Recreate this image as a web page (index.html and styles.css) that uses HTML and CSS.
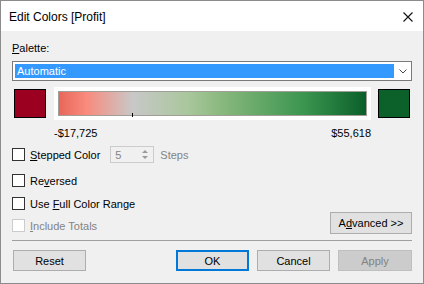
FILE: index.html
```html
<!DOCTYPE html>
<html lang="en">
<head>
  <meta charset="UTF-8" />
  <title>Edit Colors [Profit]</title>
  <link rel="stylesheet" href="styles.css">
</head>
<body>
  <div class="window">
    <div class="titlebar">
      <span class="title">Edit Colors [Profit]</span>
      <svg class="close" width="10" height="10" viewBox="0 0 10 10">
        <path d="M0.5 0.5 L9.5 9.5 M9.5 0.5 L0.5 9.5" stroke="#111" stroke-width="1.1" fill="none"/>
      </svg>
    </div>

    <div class="content">
      <div class="field-label"><u>P</u>alette:</div>
      <div class="dropdown">
        <span class="selected">Automatic</span>
        <svg class="chevron" width="8" height="5" viewBox="0 0 8 5">
          <path d="M0.5 0.5 L4 4 L7.5 0.5" stroke="#444" stroke-width="1" fill="none"/>
        </svg>
      </div>

      <div class="color-row">
        <div class="swatch swatch-neg"></div>
        <div class="ramp-frame">
          <div class="ramp"></div>
          <span class="tick"></span>
        </div>
        <div class="swatch swatch-pos"></div>
      </div>
      <div class="range-labels">
        <span>-$17,725</span>
        <span>$55,618</span>
      </div>

      <div class="check-row stepped">
        <span class="box"></span>
        <span class="check-text"><u>S</u>tepped Color</span>
        <div class="spinner">
          <span class="spin-value">5</span>
          <div class="spin-buttons">
            <span class="spin-up"></span>
            <span class="spin-down"></span>
          </div>
        </div>
        <span class="steps">Steps</span>
      </div>

      <div class="check-row reversed">
        <span class="box"></span>
        <span class="check-text">Re<u>v</u>ersed</span>
      </div>

      <div class="check-row full-range">
        <span class="box"></span>
        <span class="check-text">Use <u>F</u>ull Color Range</span>
      </div>

      <div class="totals-row">
        <div class="check-row disabled">
          <span class="box"></span>
          <span class="check-text"><u>I</u>nclude Totals</span>
        </div>
        <button class="btn advanced">A<u>d</u>vanced &gt;&gt;</button>
      </div>

      <div class="separator"></div>

      <div class="button-row">
        <button class="btn">Reset</button>
        <div class="right-buttons">
          <button class="btn default">OK</button>
          <button class="btn">Cancel</button>
          <button class="btn off">Apply</button>
        </div>
      </div>
    </div>
  </div>
</body>
</html>
```

FILE: styles.css
```css
* {
  box-sizing: border-box;
}
body {
  margin: 0;
  font-family: 'Liberation Sans', Arial, sans-serif;
  font-size: 11px;
  color: #000;
}
.window {
  width: 424px;
  height: 284px;
  border: 1px solid #8c8c8c;
  background: #f0f0f0;
  display: flex;
  flex-direction: column;
}
.titlebar {
  height: 30px;
  background: #fff;
  display: flex;
  align-items: center;
  justify-content: space-between;
  padding: 0 10px 0 8px;
}
.title {
  font-size: 12px;
  color: #000;
  margin-top: 1px;
}
.close {
  margin-top: 1px;
}
.content {
  padding: 9px 11px 0 11px;
  display: flex;
  flex-direction: column;
}
.field-label {
  line-height: 16px;
  height: 16px;
}
.dropdown {
  margin-top: 5px;
  height: 20px;
  border: 1px solid #7a7a7a;
  background: #fff;
  display: flex;
  align-items: center;
  padding: 0 4px 0 2px;
}
.selected {
  flex: 1;
  height: 14px;
  line-height: 14px;
  background: #3399ff;
  color: #fff;
  padding-left: 2px;
  margin-right: 5px;
}
.chevron {
  margin-top: 1px;
}
.color-row {
  margin-top: 6px;
  height: 33px;
  display: flex;
  align-items: center;
  padding: 0 2px;
}
.swatch {
  width: 32px;
  height: 29px;
  border: 1px solid #000;
}
.swatch-neg {
  background: #9b0020;
}
.swatch-pos {
  background: #0b6129;
}
.ramp-frame {
  position: relative;
  width: 317px;
  height: 33px;
  margin: 0 7px 0 8px;
  background: #fff;
  padding: 4px;
}
.ramp {
  height: 100%;
  border: 1px solid #a09e96;
  background: linear-gradient(to right, #e8675a 0%, #f98b7d 9%, #c8c8c8 24%, #a9c79c 42%, #86b77b 54%, #3a954f 80%, #0b5f2a 100%);
}
.tick {
  position: absolute;
  left: 78px;
  top: 26px;
  width: 1px;
  height: 4px;
  background: #000;
}
.range-labels {
  margin: 5px 0 0 42px;
  width: 317px;
  display: flex;
  justify-content: space-between;
  line-height: 16px;
  height: 16px;
}
.check-row {
  display: flex;
  align-items: center;
  height: 17px;
}
.stepped {
  margin-top: 5px;
}
.reversed {
  margin-top: 9px;
}
.full-range {
  margin-top: 6px;
}
.box {
  width: 13px;
  height: 13px;
  border: 1px solid #333;
  background: #fff;
  margin-right: 5px;
}
.spinner {
  margin-left: 10px;
  width: 44px;
  height: 17px;
  border: 1px solid #cccccc;
  display: flex;
  align-items: center;
  padding-left: 4px;
}
.spin-value {
  flex: 1;
  color: #838383;
}
.spin-buttons {
  width: 14px;
  height: 15px;
  display: flex;
  flex-direction: column;
  justify-content: center;
  align-items: center;
  margin-right: 1px;
  gap: 3px;
}
.spin-up, .spin-down {
  width: 0;
  height: 0;
  border-left: 3px solid transparent;
  border-right: 3px solid transparent;
}
.spin-up {
  border-bottom: 3px solid #9a9a9a;
}
.spin-down {
  border-top: 3px solid #9a9a9a;
}
.steps {
  margin-left: 6px;
  color: #838383;
}
.totals-row {
  display: flex;
  justify-content: space-between;
  align-items: flex-end;
  height: 22px;
}
.disabled .box {
  border-color: #cccccc;
}
.disabled .check-text {
  color: #838383;
}
.btn {
  font-family: inherit;
  font-size: 11px;
  height: 21px;
  width: 73px;
  border: 1px solid #adadad;
  background: #e1e1e1;
  color: #000;
  padding: 0;
}
.advanced {
  width: 82px;
  height: 22px;
}
.default {
  border: 2px solid #0078d7;
}
.off {
  background: #cccccc;
  border-color: #bfbfbf;
  color: #838383;
  width: 74px;
}
.separator {
  margin-top: 6px;
  height: 1px;
  background: #a0a0a0;
}
.button-row {
  margin-top: 9px;
  display: flex;
  justify-content: space-between;
  padding-left: 1px;
}
.right-buttons {
  display: flex;
  gap: 8px;
}
```
